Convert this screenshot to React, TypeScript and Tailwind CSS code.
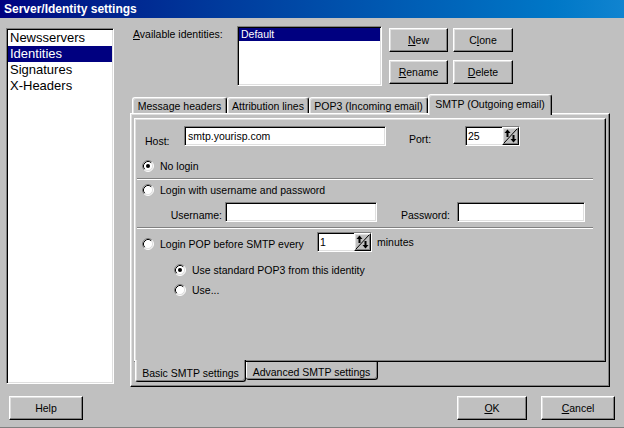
import React from "react";

// classic 3d borders
const raised =
  "border border-t-white border-l-white border-r-black border-b-black shadow-[inset_-1px_-1px_0_#808080,inset_1px_1px_0_#dfdfdf]";
const sunken =
  "border border-t-[#808080] border-l-[#808080] border-r-white border-b-white shadow-[inset_1px_1px_0_#000,inset_-1px_-1px_0_#dfdfdf]";

function Radio({ checked }: { checked?: boolean }) {
  return (
    <svg width="12" height="12" viewBox="0 0 12 12" className="shrink-0">
      <circle cx="6" cy="6" r="5" fill="#fff" />
      <path d="M2.11 9.89 A5.5 5.5 0 0 1 9.89 2.11" fill="none" stroke="#808080" />
      <path d="M9.89 2.11 A5.5 5.5 0 0 1 2.11 9.89" fill="none" stroke="#fff" />
      <path d="M2.82 9.18 A4.5 4.5 0 0 1 9.18 2.82" fill="none" stroke="#000" />
      <path d="M9.18 2.82 A4.5 4.5 0 0 1 2.82 9.18" fill="none" stroke="#dfdfdf" />
      {checked && <circle cx="6" cy="6" r="2" fill="#000" />}
    </svg>
  );
}

function RadioRow({ checked, label, indent, className = "" }: { checked?: boolean; label: string; indent: string; className?: string }) {
  return (
    <div className={`flex items-center h-[14px] ${indent} ${className}`}>
      <Radio checked={checked} />
      <span className="ml-[6px] leading-[12px] whitespace-nowrap">{label}</span>
    </div>
  );
}

function Spin({ value }: { value: string }) {
  return (
    <div className={`w-[55px] h-[20px] bg-white flex ${sunken}`}>
      <div className="flex-1 pl-[2px] flex items-center leading-[12px]">{value}</div>
      <div className={`w-[17px] h-full bg-[#c0c0c0] ${raised} flex items-center justify-center`}>
        <svg width="13" height="14" viewBox="0 0 13 14">
          <path d="M0 14 L13 0" stroke="#000" strokeWidth="1" />
          <path d="M3.5 3 V8" stroke="#000" strokeWidth="2" />
          <path d="M0.5 4 L3.5 0.5 L6.5 4 Z" fill="#000" />
          <path d="M9.5 6 V11" stroke="#000" strokeWidth="2" />
          <path d="M6.5 10 L9.5 13.5 L12.5 10 Z" fill="#000" />
        </svg>
      </div>
    </div>
  );
}

function Btn({ children, className = "" }: { children: React.ReactNode; className?: string }) {
  return (
    <div className={`h-[24px] bg-[#c0c0c0] flex items-center justify-center leading-[12px] ${raised} ${className}`}>
      {children}
    </div>
  );
}

const U = ({ c }: { c: string }) => <span className="underline underline-offset-[1px]">{c}</span>;

export default function App() {
  const sections = ["Newsservers", "Identities", "Signatures", "X-Headers"];
  const tabs = [
    { label: "Message headers", w: "w-[95px]" },
    { label: "Attribution lines", w: "w-[82px]" },
    { label: "POP3 (Incoming email)", w: "w-[119px]" },
  ];

  return (
    <div className="w-[624px] h-[428px] bg-[#c0c0c0] font-['Liberation_Sans',Arial,sans-serif] text-[10.5px] text-black flex flex-col overflow-hidden border-b border-[#808080]">
      {/* title bar */}
      <div className="h-[18px] shrink-0 bg-linear-to-r from-[#000080] to-[#1084d0] flex items-center pl-[4px] text-white font-bold text-[12px]">
        Server/Identity settings
      </div>

      <div className="flex">
        {/* section list */}
        <div className={`ml-[6px] mt-[10px] w-[108px] h-[356px] bg-white text-[13px] py-[1px] px-[1px] ${sunken}`}>
          {sections.map((s) => (
            <div
              key={s}
              className={`h-[16px] leading-[16px] pl-[2px] ${s === "Identities" ? "bg-[#000080] text-white" : ""}`}
            >
              {s}
            </div>
          ))}
        </div>

        <div className="ml-[16px] mt-[8px] w-[480px] flex flex-col">
          {/* identities */}
          <div className="h-[68px] flex">
            <div className="w-[107px] pl-[3px] pt-[2px] leading-[12px]">
              <U c="A" />vailable identities:
            </div>
            <div className={`w-[145px] h-[60px] bg-white p-[1px] ${sunken}`}>
              <div className="h-[13px] bg-[#000080] text-white pl-[2px] leading-[13px]">Default</div>
            </div>
            <div className="ml-[7px] mt-[2px] grid grid-cols-[59px_60px] gap-x-[5px] gap-y-[8px] h-fit">
              <Btn><U c="N" />ew</Btn>
              <Btn>C<U c="l" />one</Btn>
              <Btn><U c="R" />ename</Btn>
              <Btn><U c="D" />elete</Btn>
            </div>
          </div>

          {/* tabs */}
          <div className="h-[19px] flex items-end pl-[2px]">
            {tabs.map((t) => (
              <div
                key={t.label}
                className={`${t.w} h-[16px] flex items-center justify-center leading-[12px] whitespace-nowrap rounded-t-[3px] border-t border-l border-r border-t-white border-l-white border-r-black shadow-[inset_-1px_0_0_#808080,inset_1px_1px_0_#dfdfdf]`}
              >
                {t.label}
              </div>
            ))}
            <div className="w-[124px] h-[21px] -mb-[2px] relative z-10 bg-[#c0c0c0] flex items-start pt-[3px] justify-center leading-[12px] whitespace-nowrap rounded-t-[3px] border-t border-l border-r border-t-white border-l-white border-r-black shadow-[inset_-1px_0_0_#808080,inset_1px_1px_0_#dfdfdf]">
              SMTP (Outgoing email)
            </div>
          </div>

          {/* outer panel */}
          <div className={`h-[274px] pl-[3px] pt-[4px] pr-[3px] flex flex-col ${raised}`}>
            <div className={`w-[472px] h-[244px] shrink-0 flex flex-col ${raised}`}>
              {/* host row */}
              <div className="mt-[7px] h-[20px] flex items-start">
                <span className="w-[49px] pl-[10px] mt-[9px] leading-[12px]">Host:</span>
                <div className={`w-[202px] h-[20px] bg-white pl-[3px] flex items-center leading-[12px] ${sunken}`}>
                  smtp.yourisp.com
                </div>
                <span className="ml-[23px] w-[56px] mt-[7px] leading-[12px]">Port:</span>
                <Spin value="25" />
              </div>

              <RadioRow checked label="No login" indent="pl-[7px]" className="mt-[13px]" />

              <div className="mt-[5px] ml-[2px] w-[456px] h-[2px] border-t border-b border-t-[#808080] border-b-white" />

              <RadioRow label="Login with username and password" indent="pl-[7px]" className="mt-[3px]" />

              <div className="mt-[5px] h-[20px] flex items-start">
                <span className="w-[90px] text-right pr-[3px] mt-[7px] leading-[12px]">Username:</span>
                <div className={`w-[152px] h-[20px] bg-white ${sunken}`} />
                <span className="w-[80px] text-right pr-[7px] mt-[7px] leading-[12px]">Password:</span>
                <div className={`w-[128px] h-[20px] bg-white ${sunken}`} />
              </div>

              <div className="mt-[5px] ml-[2px] w-[456px] h-[2px] border-t border-b border-t-[#808080] border-b-white" />

              <div className="mt-[3px] h-[20px] flex items-start">
                <RadioRow label="Login POP before SMTP every" indent="pl-[7px] w-[182px]" className="mt-[5px]" />
                <Spin value="1" />
                <span className="ml-[5px] mt-[4px] leading-[12px]">minutes</span>
              </div>

              <RadioRow checked label="Use standard POP3 from this identity" indent="pl-[39px]" className="mt-[11px]" />
              <RadioRow label="Use..." indent="pl-[39px]" className="mt-[6px]" />
            </div>

            {/* bottom tabs */}
            <div className="flex items-start pl-[1px]">
              <div className="w-[111px] h-[22px] -mt-[2px] relative z-10 bg-[#c0c0c0] flex items-end pb-[2px] justify-center leading-[12px] whitespace-nowrap rounded-b-[3px] border-l border-r border-b border-l-white border-r-black border-b-black shadow-[inset_-1px_-1px_0_#808080,inset_1px_0_0_#dfdfdf]">
                Basic SMTP settings
              </div>
              <div className="w-[132px] h-[18px] flex items-end pb-[1px] justify-center leading-[12px] whitespace-nowrap rounded-b-[3px] border-r border-b border-r-black border-b-black shadow-[inset_-1px_-1px_0_#808080,inset_1px_0_0_#fff]">
                Advanced SMTP settings
              </div>
            </div>
          </div>
        </div>
      </div>

      {/* dialog buttons */}
      <div className="mt-[9px] flex">
        <Btn className="ml-[9px] w-[74px]">Help</Btn>
        <Btn className="ml-[374px] w-[70px]"><U c="O" />K</Btn>
        <Btn className="ml-[14px] w-[74px]"><U c="C" />ancel</Btn>
      </div>
    </div>
  );
}
